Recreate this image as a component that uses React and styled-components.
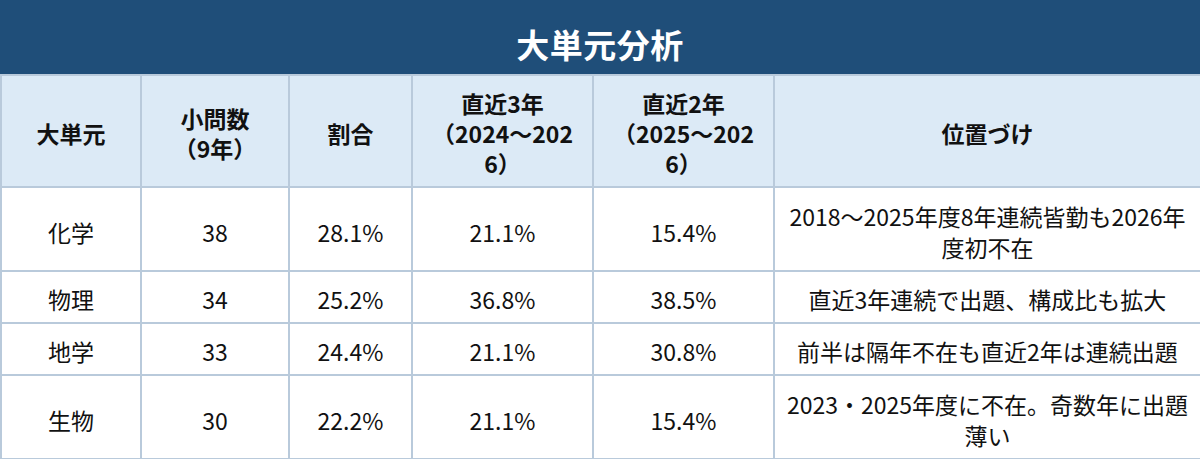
import React from "react";
import styled, { createGlobalStyle } from "styled-components";

const GlobalStyle = createGlobalStyle`
  html, body {
    margin: 0;
    padding: 0;
    background: #ffffff;
  }
  body {
    font-family: "Noto Sans CJK JP", "Noto Sans", sans-serif;
    color: #111111;
  }
`;

const Wrapper = styled.div`
  width: 1200px;
`;

const Title = styled.div`
  height: 74px;
  box-sizing: border-box;
  padding-top: 14px;
  display: flex;
  align-items: center;
  justify-content: center;
  background-color: #1f4e79;
  color: #ffffff;
  font-size: 33px;
  font-weight: 700;
  letter-spacing: 0.5px;
`;

const Table = styled.table`
  width: 1200px;
  table-layout: fixed;
  border-collapse: collapse;
  font-size: 23px;
  line-height: 30px;
`;

const Th = styled.th`
  background-color: #dceaf6;
  border: 2px solid #b9cadb;
  padding: 12px 12px 8px;
  font-weight: 700;
  text-align: center;
  vertical-align: middle;
  word-break: break-all;
`;

const Td = styled.td`
  background-color: #ffffff;
  border: 2px solid #b9cadb;
  padding: ${(p) => (p.$tall ? "13px 6px 7px" : "12px 6px 7px")};
  font-weight: 400;
  text-align: center;
  vertical-align: middle;
  line-height: 31px;
`;

const columns = [140, 148, 123, 181, 181, 427];

const headers = [
  "大単元",
  "小問数\n（9年）",
  "割合",
  "直近3年\n（2024～2026）",
  "直近2年\n（2025～2026）",
  "位置づけ",
];

const rows = [
  ["化学", "38", "28.1%", "21.1%", "15.4%", "2018～2025年度8年連続皆勤も2026年度初不在"],
  ["物理", "34", "25.2%", "36.8%", "38.5%", "直近3年連続で出題、構成比も拡大"],
  ["地学", "33", "24.4%", "21.1%", "30.8%", "前半は隔年不在も直近2年は連続出題"],
  ["生物", "30", "22.2%", "21.1%", "15.4%", "2023・2025年度に不在。奇数年に出題薄い"],
];

const Lines = ({ text }) =>
  text.split("\n").map((line, i) => (
    <React.Fragment key={i}>
      {i > 0 && <br />}
      {line}
    </React.Fragment>
  ));

const App = () => {
  return (
    <Wrapper>
      <GlobalStyle />
      <Title>大単元分析</Title>
      <Table>
        <colgroup>
          {columns.map((w, i) => (
            <col key={i} style={{ width: w }} />
          ))}
        </colgroup>
        <thead>
          <tr>
            {headers.map((h, i) => (
              <Th key={i}>
                <Lines text={h} />
              </Th>
            ))}
          </tr>
        </thead>
        <tbody>
          {rows.map((row, r) => (
            <tr key={r}>
              {row.map((cell, c) => (
                <Td key={c} $tall={r === 0 || r === 3}>
                  {cell}
                </Td>
              ))}
            </tr>
          ))}
        </tbody>
      </Table>
    </Wrapper>
  );
};

export default App;
